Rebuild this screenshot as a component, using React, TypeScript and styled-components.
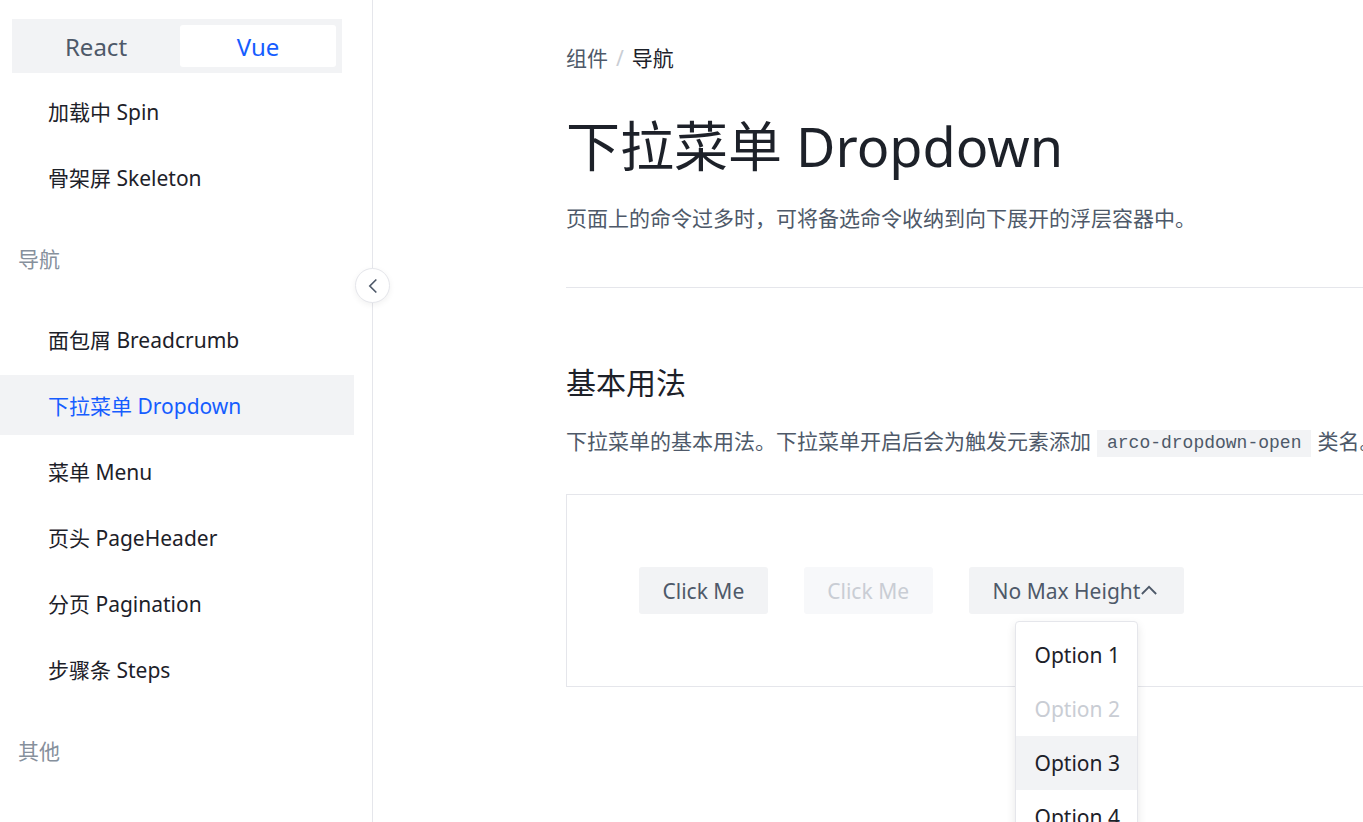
import React from "react";
import styled, { createGlobalStyle } from "styled-components";

const GlobalStyle = createGlobalStyle`
  html, body {
    margin: 0;
    padding: 0;
    background: #ffffff;
    overflow: hidden;
  }
  body {
    font-family: "Noto Sans", "Noto Sans CJK SC", sans-serif;
    color: #1d2129;
  }
  * {
    box-sizing: border-box;
  }
`;

interface NavEntry {
  kind: "item" | "group";
  label: string;
  active?: boolean;
}

const navEntries: NavEntry[] = [
  { kind: "item", label: "加载中 Spin" },
  { kind: "item", label: "骨架屏 Skeleton" },
  { kind: "group", label: "导航" },
  { kind: "item", label: "面包屑 Breadcrumb" },
  { kind: "item", label: "下拉菜单 Dropdown", active: true },
  { kind: "item", label: "菜单 Menu" },
  { kind: "item", label: "页头 PageHeader" },
  { kind: "item", label: "分页 Pagination" },
  { kind: "item", label: "步骤条 Steps" },
  { kind: "group", label: "其他" },
];

const options = [
  { label: "Option 1" },
  { label: "Option 2", disabled: true },
  { label: "Option 3", hover: true },
  { label: "Option 4" },
];

const ChevronLeft = () => (
  <svg width="20" height="20" viewBox="0 0 48 48" fill="none">
    <path d="M32 8.4 16.4 24 32 39.6" stroke="#4e5969" strokeWidth="4" />
  </svg>
);

const ChevronUp = () => (
  <svg width="22" height="22" viewBox="0 0 48 48" fill="none">
    <path
      d="M39.6 30.557 24.043 15 8.487 30.557"
      stroke="#4e5969"
      strokeWidth="4"
    />
  </svg>
);

const App: React.FC = () => {
  return (
    <>
      <GlobalStyle />
      <Layout>
        <Sidebar>
          <Segmented>
            <SegTab>React</SegTab>
            <SegTab $active>Vue</SegTab>
          </Segmented>
          <Menu>
            {navEntries.map((entry) =>
              entry.kind === "group" ? (
                <GroupTitle key={entry.label}>{entry.label}</GroupTitle>
              ) : (
                <MenuItem key={entry.label} $active={entry.active}>
                  {entry.label}
                </MenuItem>
              )
            )}
          </Menu>
          <CollapseButton>
            <ChevronLeft />
          </CollapseButton>
        </Sidebar>
        <Main>
          <Article>
            <Breadcrumb>
              <span>组件</span>
              <Slash>/</Slash>
              <Current>导航</Current>
            </Breadcrumb>
            <Title>下拉菜单 Dropdown</Title>
            <Lead>页面上的命令过多时，可将备选命令收纳到向下展开的浮层容器中。</Lead>
            <Divider />
            <SectionTitle>基本用法</SectionTitle>
            <Paragraph>
              下拉菜单的基本用法。下拉菜单开启后会为触发元素添加
              <Code>arco-dropdown-open</Code>
              类名。
            </Paragraph>
            <DemoBox>
              <Button>Click Me</Button>
              <Button disabled>Click Me</Button>
              <Trigger>
                <Button $withIcon>
                  No Max Height
                  <ChevronUp />
                </Button>
                <Dropdown>
                  {options.map((o) => (
                    <Option
                      key={o.label}
                      $disabled={o.disabled}
                      $hover={o.hover}
                    >
                      {o.label}
                    </Option>
                  ))}
                </Dropdown>
              </Trigger>
            </DemoBox>
          </Article>
        </Main>
      </Layout>
    </>
  );
};

export default App;

const Layout = styled.div`
  display: flex;
  width: 1363px;
  height: 822px;
  overflow: hidden;
`;

const Sidebar = styled.aside`
  position: relative;
  flex: 0 0 373px;
  height: 822px;
  border-right: 1px solid #e5e6eb;
  padding: 19px 0 0;
`;

const Segmented = styled.div`
  display: grid;
  grid-template-columns: 1fr 1fr;
  gap: 6px;
  margin: 0 30px 0 12px;
  padding: 6px;
  height: 54px;
  background: #f2f3f5;
`;

const SegTab = styled.div<{ $active?: boolean }>`
  display: flex;
  align-items: center;
  justify-content: center;
  border-radius: 3px;
  font-size: 24px;
  color: ${(p) => (p.$active ? "#165dff" : "#4e5969")};
  background: ${(p) => (p.$active ? "#ffffff" : "transparent")};
`;

const Menu = styled.nav`
  display: flex;
  flex-direction: column;
  padding-top: 5px;
  padding-right: 18px;
`;

const MenuItem = styled.div<{ $active?: boolean }>`
  display: flex;
  align-items: center;
  height: 60px;
  margin: 3px 0;
  padding-left: 48px;
  font-size: 21px;
  color: ${(p) => (p.$active ? "#165dff" : "#1d2129")};
  background: ${(p) => (p.$active ? "#f2f3f5" : "transparent")};
`;

const GroupTitle = styled.div`
  display: flex;
  align-items: center;
  height: 90px;
  margin: 3px 0;
  padding-left: 18px;
  font-size: 21px;
  color: #86909c;
`;

const CollapseButton = styled.div`
  position: absolute;
  top: 268px;
  right: -18px;
  width: 35px;
  height: 35px;
  border-radius: 50%;
  background: #ffffff;
  border: 1px solid #e5e6eb;
  box-shadow: 0 2px 6px rgba(0, 0, 0, 0.06);
  display: flex;
  align-items: center;
  justify-content: center;
  z-index: 2;
`;

const Main = styled.main`
  flex: 1;
  min-width: 0;
  padding: 0 0 0 193px;
`;

const Article = styled.div`
  width: 1100px;
  padding-top: 43px;
`;

const Breadcrumb = styled.div`
  display: flex;
  align-items: center;
  font-size: 21px;
  line-height: 30px;
  color: #4e5969;
`;

const Slash = styled.span`
  margin: 0 8px;
  color: #c9cdd4;
`;

const Current = styled.span`
  color: #1d2129;
`;

const Title = styled.h1`
  margin: 36px 0 0;
  font-size: 54px;
  line-height: 74px;
  font-weight: 400;
  color: #1d2129;
`;

const Lead = styled.p`
  margin: 19px 0 0;
  font-size: 21px;
  line-height: 32px;
  color: #4e5969;
`;

const Divider = styled.hr`
  margin: 53px 0 0;
  border: none;
  border-top: 1px solid #e5e6eb;
`;

const SectionTitle = styled.h2`
  margin: 74px 0 0;
  font-size: 30px;
  line-height: 42px;
  font-weight: 400;
  color: #1d2129;
`;

const Paragraph = styled.p`
  margin: 21px 0 0;
  font-size: 21px;
  line-height: 32px;
  color: #4e5969;
`;

const Code = styled.code`
  display: inline-block;
  margin: 0 6px;
  padding: 0 10px;
  height: 27px;
  line-height: 27px;
  font-family: "Liberation Mono", "DejaVu Sans Mono", monospace;
  font-size: 18px;
  background: #f2f3f5;
  color: #4e5969;
  vertical-align: 1px;
`;

const DemoBox = styled.div`
  display: flex;
  align-items: flex-start;
  gap: 36px;
  margin-top: 37px;
  padding: 72px;
  border: 1px solid #e5e6eb;
`;

const Button = styled.button<{ $withIcon?: boolean }>`
  display: inline-flex;
  align-items: center;
  height: 47px;
  padding: 0 ${(p) => (p.$withIcon ? "24px" : "23.5px")};
  border: none;
  border-radius: 3px;
  font-family: inherit;
  font-size: 21px;
  color: #4e5969;
  background: #f2f3f5;
  &:disabled {
    color: #c9cdd4;
    background: #f7f8fa;
  }
  svg {
    margin-left: -2px;
  }
`;

const Trigger = styled.div`
  position: relative;
`;

const Dropdown = styled.ul`
  position: absolute;
  top: 54px;
  left: 46px;
  width: 123px;
  margin: 0;
  padding: 6px 0;
  list-style: none;
  background: #ffffff;
  border: 1px solid #e5e6eb;
  border-radius: 4px;
  box-shadow: 0 4px 10px rgba(0, 0, 0, 0.1);
  z-index: 5;
`;

const Option = styled.li<{ $disabled?: boolean; $hover?: boolean }>`
  display: flex;
  align-items: center;
  height: 54px;
  padding: 0 19px;
  font-size: 21px;
  white-space: nowrap;
  color: ${(p) => (p.$disabled ? "#c9cdd4" : "#1d2129")};
  background: ${(p) => (p.$hover ? "#f2f3f5" : "transparent")};
`;
